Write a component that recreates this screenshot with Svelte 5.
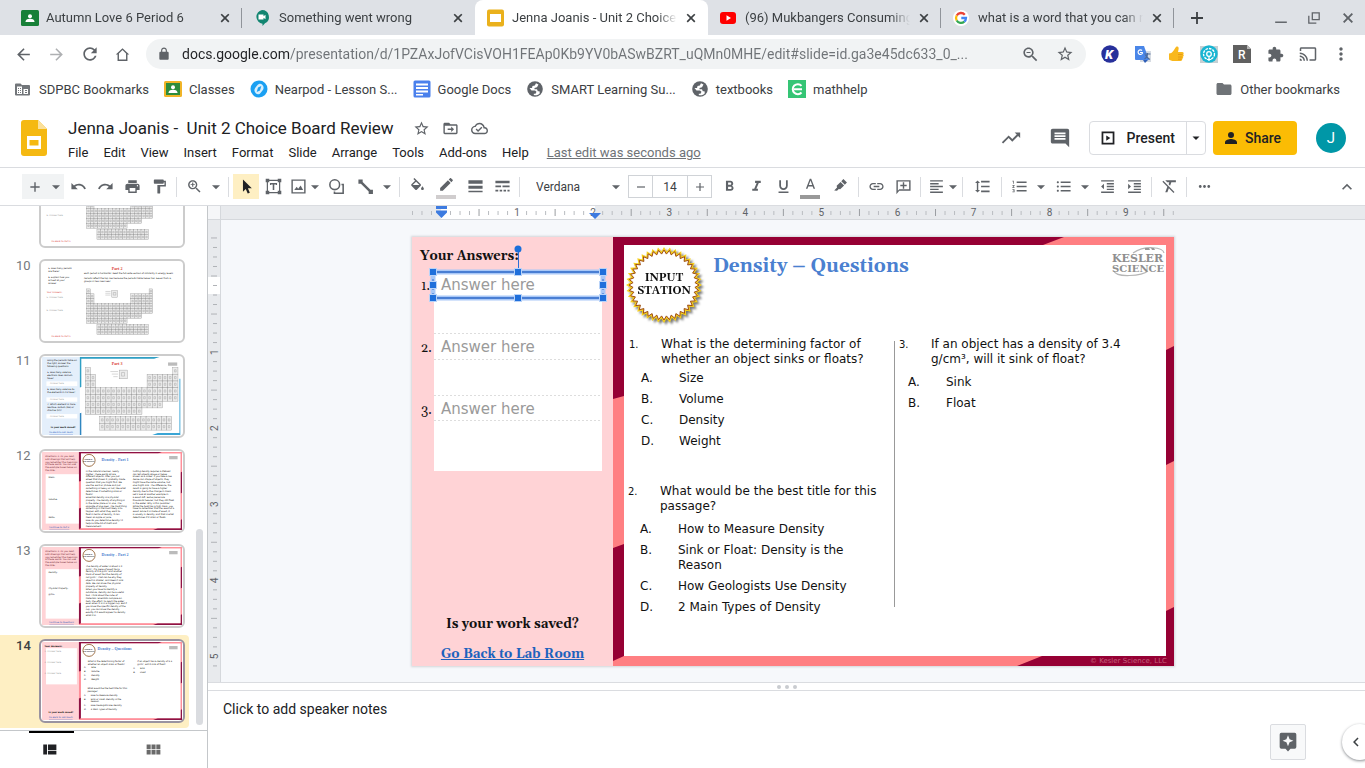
<script lang="ts">
  const tabs = [
    { title: 'Autumn Love 6 Period 6', icon: 'classroom', active: false },
    { title: 'Something went wrong', icon: 'meet', active: false },
    { title: 'Jenna Joanis - Unit 2 Choice B', icon: 'slides', active: true },
    { title: '(96) Mukbangers Consuming', icon: 'youtube', active: false },
    { title: 'what is a word that you can re', icon: 'google', active: false },
  ];

  const bookmarks = [
    { label: 'SDPBC Bookmarks', icon: 'managed' },
    { label: 'Classes', icon: 'classes' },
    { label: 'Nearpod - Lesson S...', icon: 'nearpod' },
    { label: 'Google Docs', icon: 'docs' },
    { label: 'SMART Learning Su...', icon: 'globe' },
    { label: 'textbooks', icon: 'globe' },
    { label: 'mathhelp', icon: 'mathhelp' },
  ];

  const extensions = ['kami', 'translate', 'thumb', 'wheel', 'reader'];
  const menus = ['File', 'Edit', 'View', 'Insert', 'Format', 'Slide', 'Arrange', 'Tools', 'Add-ons', 'Help'];

  const paths: Record<string, string> = {
    back: 'M20 11H7.83l5.59-5.59L12 4l-8 8 8 8 1.41-1.41L7.83 13H20v-2z',
    forward: 'M12 4l-1.41 1.41L16.17 11H4v2h12.17l-5.58 5.59L12 20l8-8z',
    reload:
      'M17.65 6.35C16.2 4.9 14.21 4 12 4c-4.42 0-7.99 3.58-7.99 8s3.57 8 7.99 8c3.73 0 6.84-2.55 7.73-6h-2.08c-.82 2.33-3.04 4-5.65 4-3.31 0-6-2.69-6-6s2.69-6 6-6c1.66 0 3.14.69 4.22 1.78L13 11h7V4l-2.35 2.35z',
    home: 'M12 3 2.5 12H5v9h14v-9h2.500zM7 19v-8.500l5-4.700 5 4.700V19z',
    lock: 'M18 8h-1V6c0-2.760-2.240-5-5-5S7 3.240 7 6v2H6c-1.100 0-2 .9-2 2v10c0 1.100.9 2 2 2h12c1.100 0 2-.9 2-2V10c0-1.100-.9-2-2-2zM9 6c0-1.660 1.340-3 3-3s3 1.340 3 3v2H9z',
    star: 'M22 9.24l-7.190-.62L12 2 9.190 8.630 2 9.240l5.460 4.730L5.820 21 12 17.270 18.180 21l-1.630-7.030zM12 15.400l-3.760 2.270 1-4.280-3.320-2.880 4.380-.38L12 6.100l1.710 4.040 4.380.38-3.320 2.880 1 4.280z',
    zoomOut:
      'M15.5 14h-.79l-.28-.27C15.410 12.590 16 11.110 16 9.500 16 5.910 13.090 3 9.500 3S3 5.910 3 9.500 5.910 16 9.500 16c1.610 0 3.090-.59 4.230-1.570l.27.28v.79l5 4.990L20.490 19zm-6 0C7.010 14 5 11.990 5 9.500S7.010 5 9.500 5 14 7.010 14 9.500 11.990 14 9.500 14zM7 8.700h5v1.500H7z',
    zoomIn:
      'M15.5 14h-.79l-.28-.27C15.410 12.590 16 11.110 16 9.500 16 5.910 13.090 3 9.500 3S3 5.910 3 9.500 5.910 16 9.500 16c1.610 0 3.090-.59 4.230-1.570l.27.28v.79l5 4.990L20.490 19zm-6 0C7.010 14 5 11.990 5 9.500S7.010 5 9.500 5 14 7.010 14 9.500 11.990 14 9.500 14zm3-4h-2.200v2.200H8.700V10H6.500V8.700h2.200V6.500h1.600v2.200h2.200z',
    puzzle:
      'M20.5 11H19V7c0-1.1-.9-2-2-2h-4V3.5C13 2.12 11.88 1 10.5 1S8 2.12 8 3.5V5H4c-1.1 0-1.99.9-1.99 2v3.8H3.5c1.49 0 2.7 1.21 2.7 2.7s-1.21 2.7-2.7 2.7H2V20c0 1.1.9 2 2 2h3.8v-1.5c0-1.49 1.21-2.7 2.7-2.7 1.49 0 2.7 1.21 2.7 2.7V22H17c1.1 0 2-.9 2-2v-4h1.5c1.38 0 2.5-1.12 2.5-2.5S21.88 11 20.5 11z',
    cast: 'M21 3H3c-1.1 0-2 .9-2 2v3h2V5h18v14h-7v2h7c1.1 0 2-.9 2-2V5c0-1.1-.9-2-2-2zM1 18v3h3c0-1.66-1.34-3-3-3zm0-4v2c2.76 0 5 2.24 5 5h2c0-3.87-3.13-7-7-7zm0-4v2c4.97 0 9 4.03 9 9h2c0-6.08-4.93-11-11-11z',
    dots: 'M12 8c1.1 0 2-.9 2-2s-.9-2-2-2-2 .9-2 2 .9 2 2 2zm0 2c-1.1 0-2 .9-2 2s.9 2 2 2 2-.9 2-2-.9-2-2-2zm0 6c-1.1 0-2 .9-2 2s.9 2 2 2 2-.9 2-2-.9-2-2-2z',
    more: 'M6 10c-1.1 0-2 .9-2 2s.9 2 2 2 2-.9 2-2-.9-2-2-2zm12 0c-1.1 0-2 .9-2 2s.9 2 2 2 2-.9 2-2-.9-2-2-2zm-6 0c-1.1 0-2 .9-2 2s.9 2 2 2 2-.9 2-2-.9-2-2-2z',
    folder: 'M10 4H4c-1.1 0-1.99.9-1.99 2L2 18c0 1.1.9 2 2 2h16c1.1 0 2-.9 2-2V8c0-1.1-.9-2-2-2h-8l-2-2z',
    close: 'M19.500 6.500L17.500 4.500 12 10 6.500 4.500 4.500 6.500 10 12 4.500 17.500 6.500 19.500 12 14 17.500 19.500 19.500 17.500 14 12z',
    plus: 'M20 13.2h-6.800V20h-2.400v-6.800H4v-2.400h6.800V4h2.400v6.800H20z',
    minus: 'M20 13.2H4v-2.400h16z',
    minimize: 'M2 18h20v2.500H2z',
    restore: 'M8 2h14v14H8zM10.200 4.200v9.600h9.600V4.200zM2 8h2.200v11.800H16V22H2z',
    caret: 'M6 9.500l6 6 6-6z',
    undo: 'M12.5 8c-2.65 0-5.05.99-6.9 2.6L2 7v9h9l-3.62-3.62c1.39-1.16 3.16-1.88 5.12-1.88 3.54 0 6.55 2.31 7.6 5.5l2.37-.78C21.08 11.03 17.15 8 12.5 8z',
    redo: 'M18.4 10.6C16.55 8.99 14.15 8 11.5 8c-4.65 0-8.58 3.03-9.96 7.22L3.9 16c1.05-3.19 4.05-5.5 7.6-5.5 1.95 0 3.73.72 5.12 1.88L13 16h9V7l-3.6 3.6z',
    print: 'M19 8H5c-1.66 0-3 1.34-3 3v6h4v4h12v-4h4v-6c0-1.66-1.34-3-3-3zm-3 11H8v-5h8v5zm3-7c-.55 0-1-.45-1-1s.45-1 1-1 1 .45 1 1-.45 1-1 1zm-1-9H6v4h12V3z',
    paint: 'M18 4V3c0-.55-.45-1-1-1H5c-.55 0-1 .45-1 1v4c0 .55.45 1 1 1h12c.55 0 1-.45 1-1V6h1v4H9v11c0 .55.45 1 1 1h2c.55 0 1-.45 1-1v-9h8V4h-3z',
    cursor: 'M7 2v17.500l4-3.800 2.700 6.300 3-1.300-2.700-6.200h5.500z',
    textbox:
      'M1 1h5v1.500h12V1h5v5h-1.500v12H23v5h-5v-1.500H6V23H1v-5h1.500V6H1zM6 4.200V6H4.200v12H6v1.800h12V18h1.800V6H18V4.200zM7 7h10v3h-1.600V9h-2.300v8h-2.200V9H8.600v1H7z',
    image: 'M2 2h20v20H2zM4 4v16h16V4zM6 17l3.500-4.500 2 2.500 3.500-4.500L18.500 17z',
    shape:
      'M9.500 1.500a8 8 0 1 1 0 16 8 8 0 0 1 0-16zM9.500 3.700a5.800 5.800 0 1 0 0 11.600 5.800 5.800 0 0 0 0-11.600zM19 8h3.500v14.500H8V19h2.200v1.300h10.100V10.200H19z',
    line: 'M2 2h6v3.500L19 16.500h3.500v6h-6v-3.500L5.500 8H2z',
    fill: 'M16.56 8.94L7.62 0 6.21 1.41l2.38 2.38-5.15 5.15c-.59.59-.59 1.54 0 2.12l5.5 5.5c.29.29.68.44 1.06.44s.77-.15 1.06-.44l5.5-5.5c.59-.58.59-1.53 0-2.12zM5.21 10L10 5.21 14.79 10H5.21zM19 11.5s-2 2.17-2 3.5c0 1.1.9 2 2 2s2-.9 2-2c0-1.33-2-3.5-2-3.5z',
    pen: 'M3 14.250V18h3.750L17.810 6.940l-3.750-3.750zM20.710 4.040c.39-.39.39-1.020 0-1.410L18.370.29c-.39-.39-1.020-.39-1.410 0l-1.830 1.830 3.750 3.750z',
    weight: 'M2 3h20v5H2zM2 11h20v4H2zM2 18h20v2H2z',
    dash: 'M2 4h20v3.500H2zM2 10.500h8v2.500H2zM12 10.500h10v2.500H12zM2 16.500h4v2.500H2zM8 16.500h3.500v2.500H8zM13.500 16.500H17v2.500h-3.500zM19 16.500h3v2.500h-3z',
    bold: 'M15.6 10.79c.97-.67 1.65-1.77 1.65-2.79 0-2.26-1.75-4-4-4H7v14h7.04c2.09 0 3.71-1.7 3.71-3.79 0-1.52-.86-2.82-2.15-3.42zM10 6.500h3c.83 0 1.500.67 1.500 1.500s-.67 1.500-1.500 1.500h-3zm3.500 9H10v-3h3.500c.83 0 1.500.67 1.500 1.500s-.67 1.500-1.500 1.500z',
    italic: 'M10 4v3h2.21l-3.42 8H6v3h8v-3h-2.21l3.42-8H18V4z',
    underline: 'M12 17c3.31 0 6-2.69 6-6V3h-2.500v8c0 1.930-1.570 3.500-3.500 3.500S8.500 12.930 8.500 11V3H6v8c0 3.310 2.690 6 6 6zm-7 2v2h14v-2z',
    textColor: 'M11 1L5.500 15h2.250l1.120-3h6.250l1.120 3h2.250L13 1zm-1.380 9L12 3.670 14.380 10z',
    highlight: 'M13.500 5.500l5 5-5.500 5.500-2-.5-2.500 2.500-4-.2L8.500 13.500 8 11zM17.500 1.500l5 5-3 3-5-5z',
    link: 'M3.9 12c0-1.71 1.39-3.1 3.1-3.1h4V7H7c-2.76 0-5 2.24-5 5s2.24 5 5 5h4v-1.9H7c-1.71 0-3.1-1.39-3.1-3.1zM8 13h8v-2H8v2zm9-6h-4v1.900h4c1.710 0 3.100 1.390 3.100 3.100s-1.390 3.100-3.100 3.100h-4V17h4c2.760 0 5-2.240 5-5s-2.240-5-5-5z',
    addComment: 'M2 23V3h20v15H6zM4 5v13l2-2h14V5zM11 6h2v3.500h3.500v2H13V15h-2v-3.500H7.500v-2H11z',
    align: 'M15 15H3v2h12v-2zm0-8H3v2h12V7zM3 13h18v-2H3v2zm0 8h18v-2H3v2zM3 3v2h18V3H3z',
    spacing: 'M6 7h2.5L5 3.5 1.5 7H4v10H1.5L5 20.5 8.5 17H6V7zm4-3v2.300h12V4zm0 16h12v-2.300H10zm0-7h12v-2H10z',
    numbered:
      'M2 17h2v.5H3v1h1v.5H2v1h3v-4H2v1zm1-9h1V4H2v1h1v3zm-1 3h1.8L2 13.100v.9h3v-1H3.200L5 10.900V10H2zm6-6v2h14V5zm0 14h14v-2H8zm0-6h14v-2H8z',
    bulleted:
      'M4 10.500c-.83 0-1.500.67-1.500 1.500s.67 1.500 1.500 1.500 1.500-.67 1.500-1.500-.67-1.500-1.500-1.500zm0-6c-.83 0-1.500.67-1.500 1.500S3.170 7.500 4 7.500 5.500 6.830 5.500 6 4.830 4.500 4 4.500zm0 12c-.83 0-1.500.68-1.500 1.500s.68 1.500 1.500 1.500 1.500-.68 1.500-1.500-.67-1.500-1.500-1.500zM8 19h14v-2H8zm0-6h14v-2H8zm0-8v2h14V5z',
    outdent: 'M11 17h10v-2H11v2zm-8-5l4 4V8l-4 4zm0 9h18v-2H3v2zM3 3v2h18V3H3zm8 6h10V7H11v2zm0 4h10v-2H11v2z',
    indent: 'M3 21h18v-2H3v2zM3 8v8l4-4-4-4zm8 9h10v-2H11v2zM3 3v2h18V3H3zm8 6h10V7H11v2zm0 4h10v-2H11v2z',
    clear: 'M3.270 4L2 5.270l6.970 6.970L6 20h3l2.070-5.660L17.730 21 19 19.730zM6 3v.18L8.820 6h2.900l-1 2.680 2.100 2.100L14.610 6H21V3z',
    up: 'M12 8l-6 6 1.41 1.41L12 10.83l4.59 4.58L18 14z',
    left: 'M15.4 7.400L14 6l-6 6 6 6 1.400-1.400L10.800 12z',
    trend: 'M16 6l2.29 2.29-4.88 4.88-4-4L2 16.59 3.41 18l6-6 4 4 6.3-6.29L22 12V6z',
    comments: 'M21.99 4c0-1.1-.89-2-1.99-2H4c-1.1 0-2 .9-2 2v12c0 1.1.9 2 2 2h14l4 4-.01-18zM18 14H6v-2h12v2zm0-3H6V9h12v2zm0-3H6V6h12v2z',
    cloud: 'M19.35 10.04C18.67 6.59 15.64 4 12 4 9.11 4 6.6 5.64 5.35 8.04 2.34 8.36 0 10.91 0 14c0 3.31 2.69 6 6 6h13c2.76 0 5-2.24 5-5 0-2.64-2.05-4.78-4.65-4.96zM19 18H6c-2.21 0-4-1.79-4-4 0-2.05 1.53-3.76 3.56-3.97l1.07-.11.5-.95C8.08 7.14 9.94 6 12 6c2.62 0 4.88 1.86 5.39 4.43l.3 1.5 1.53.11c1.56.1 2.78 1.41 2.78 2.96 0 1.65-1.35 3-3 3zm-9-3.82l-2.09-2.09L6.5 13.5 10 17l6.01-6.01-1.41-1.41z',
    move: 'M20 6h-8l-2-2H4c-1.100 0-2 .9-2 2v12c0 1.100.9 2 2 2h16c1.100 0 2-.9 2-2V8c0-1.100-.9-2-2-2zm0 12H4V8h16zm-7-1 4-4-4-4v3H8v2h5z',
    present: 'M1 1h22v22H1zM4 4v16h16V4zM9 7.500l7 4.500-7 4.500z',
    people: 'M9 12a4.500 4.500 0 1 0 0-9 4.500 4.500 0 0 0 0 9zM0 21v-2.500C0 15 6 13.500 9 13.500s9 1.500 9 5V21z',
    explore: 'M4 1h16a2 2 0 0 1 2 2v15a2 2 0 0 1-2 2h-5l-3 3.500L9 20H4a2 2 0 0 1-2-2V3a2 2 0 0 1 2-2zM12 4l-1.900 4.600L5.500 10.500l4.600 1.900L12 17l1.900-4.600 4.600-1.900-4.600-1.900z',
    strip: 'M2 4h6v16H2zM9.500 4H23v9H9.500zM9.500 14.500H23V20H9.500z',
    grid: 'M1 4h6.500v7.500H1zM8.800 4h6.500v7.500H8.800zM16.500 4H23v7.500h-6.500zM1 12.700h6.500V20H1zM8.800 12.700h6.500V20H8.800zM16.500 12.700H23V20h-6.500z',
  };

  // Widths of the toolbar buttons come from the class named in `size`.
  type Tool = { icon?: string; label?: string; size?: string; swatch?: string; on?: boolean; sep?: boolean };
  const sep: Tool = { sep: true };
  const caret = (label: string, size = 'caret'): Tool => ({ icon: 'caret', label, size });

  const toolsLeft: Tool[] = [
    { icon: 'undo', label: 'Undo' },
    { icon: 'redo', label: 'Redo' },
    { icon: 'print', label: 'Print' },
    { icon: 'paint', label: 'Paint format' },
    sep,
    { icon: 'zoomIn', label: 'Zoom' },
    caret('Zoom options'),
    sep,
    { icon: 'cursor', label: 'Select', on: true },
    { icon: 'textbox', label: 'Text box' },
    { icon: 'image', label: 'Insert image', size: 'slim' },
    caret('Image options', 'slim-caret'),
    { icon: 'shape', label: 'Shape', size: 'wide' },
    { icon: 'line', label: 'Line' },
    caret('Line options'),
    sep,
    { icon: 'fill', label: 'Fill color' },
    { icon: 'pen', label: 'Border color', size: 'wide', swatch: '#d0cdce' },
    { icon: 'weight', label: 'Border weight' },
    { icon: 'dash', label: 'Border dash' },
    sep,
  ];

  const toolsRight: Tool[] = [
    { icon: 'bold', label: 'Bold' },
    { icon: 'italic', label: 'Italic' },
    { icon: 'underline', label: 'Underline' },
    { icon: 'textColor', label: 'Text color', swatch: '#999999' },
    { icon: 'highlight', label: 'Highlight color', size: 'wide' },
    sep,
    { icon: 'link', label: 'Insert link' },
    { icon: 'addComment', label: 'Add comment' },
    sep,
    { icon: 'align', label: 'Align', size: 'slim' },
    caret('Align options', 'slim-caret'),
    sep,
    { icon: 'spacing', label: 'Line spacing', size: 'wide' },
    sep,
    { icon: 'numbered', label: 'Numbered list' },
    caret('Numbered list options'),
    { icon: 'bulleted', label: 'Bulleted list' },
    caret('Bulleted list options'),
    { icon: 'outdent', label: 'Decrease indent' },
    { icon: 'indent', label: 'Increase indent' },
    sep,
    { icon: 'clear', label: 'Clear formatting' },
    sep,
    { icon: 'more', label: 'More' },
  ];

  let docTitle = $state('Jenna Joanis -  Unit 2 Choice Board Review');
  let url = $state('docs.google.com/presentation/d/1PZAxJofVCisVOH1FEAp0Kb9YV0bASwBZRT_uQMn0MHE/edit#slide=id.ga3e45dc633_0_...');
  let fontSize = $state(14);
  let notes = $state('Click to add speaker notes');
  let selected = $state(14);

  const slides = [
    { n: 9, kind: 'table' },
    { n: 10, kind: 'table' },
    { n: 11, kind: 'blue' },
    { n: 12, kind: 'density' },
    { n: 13, kind: 'density' },
    { n: 14, kind: 'questions' },
  ];

  // First filled row of each column in the periodic table.
  const firstRow = [0, 1, 3, 3, 3, 3, 3, 3, 3, 3, 3, 3, 1, 1, 1, 1, 1, 0];

  function tableCells(x: number, y: number, w: number, h: number) {
    const cells: { x: number; y: number }[] = [];
    firstRow.forEach((start, col) => {
      for (let row = start; row < 7; row++) {
        if (row === 6 && col > 10) continue;
        if (row === 5 && col > 14) continue;
        cells.push({ x: x + col * w, y: y + row * h });
      }
    });
    for (let row = 0; row < 2; row++) {
      for (let col = 0; col < 14; col++) cells.push({ x: x + w * 2.8 + col * w, y: y + h * (7.3 + row) });
    }
    return cells;
  }

  const ticks = Array.from({ length: 81 }, (_, i) => i - 3);
  const vTicks = Array.from({ length: 46 }, (_, i) => i - 4);

  const burst = Array.from({ length: 80 }, (_, i) => {
    const r = i % 2 ? 31 : 35;
    const a = (i / 80) * Math.PI * 2;
    return `${(40 + r * Math.cos(a)).toFixed(1)},${(40 + r * Math.sin(a)).toFixed(1)}`;
  }).join(' ');

  const readings: Record<number, string[]> = {
    12: ['In the natural sciences, nearly', 'matter. These words all are', 'different objects. After you put', 'wheel that shows it, probably made', 'question that you might find. We', 'use the word or phrase and put', 'something is heavy or not, like what', 'determines if something sinks or', 'floats?', 'Essential density is a physical', 'property. The density of anything is', 'in the same place or in one. The', 'opposite of one goes. The most thing', 'something in the most likely is to', 'happen with what they want to', 'float in terms of density, it can', 'mean an apple or juice.', 'How do you determine density? It', 'helps a little bit of math and', 'measurement.'],
    13: ['The density of water is about 1.0', 'g/cm³. If a piece of wood has a', 'density of 0.8 g/cm³ and another', 'block of wood has the density of', 'not g/cm³. That can be why they', 'object is smaller, and doesn’t sink', 'data. We can know the physical', 'property of density.', 'When you have to identify a', 'substance, density can be a useful', 'tool. Think about the cube of', 'materials. Scientists compare an', 'item, the effort, to reach the water', 'even when it is in a bigger cup. But if', 'you know the specific density of the', 'cup, you can know the density', 'exactly if it would appear to density', 'what it is.'],
  };
  const secondColumn = ['Cutting density requires a lifeboat', 'can tell objects above or below', 'known as a sinker. If you take a low', 'dense can shape of objects, they', 'might have the same volume, but', 'one might sink. The difference, the', 'result is going to have a higher', 'density due to the change in mass.', 'Let’s look at another example in', 'a wood raft. Some pieces are', 'thousands heavier, but they still float', 'in the water. Why is this possible?', 'While the boat has a high mass, you', 'have to remember that the wood of a', 'wood. Since it is made of wood, it', 'is usually in density, and that is what', 'determines if it sinks or floats.'];
  const directions = ['Directions: 1. As you read,', 'add drawings that will help', 'you remember the meanings', 'of these words. You can use', 'the example boxes below on', 'the slide.'];
</script>

{#snippet icon(name: string, size = 18)}
  <svg class="icon" width={size} height={size} viewBox="0 0 24 24" fill="currentColor" fill-rule="evenodd" aria-hidden="true">
    <path d={paths[name]} />
  </svg>
{/snippet}

{#snippet brand(name: string)}
  <svg class="icon" width="18" height="18" viewBox="0 0 18 18" aria-hidden="true">
    {#if name === 'classroom' || name === 'classes'}
      <rect x="0" y="1" width="18" height="16" rx="1.500" fill={name === 'classes' ? '#f0b428' : '#188038'} />
      <rect x="2" y="3" width="14" height="12" fill={name === 'classes' ? '#2d8c3c' : '#188038'} />
      <circle cx="9" cy="7.300" r="2" fill="#fff" />
      <path d="M4.500 13c0-2.500 2.500-3.200 4.500-3.200s4.500.7 4.500 3.200z" fill="#fff" />
    {:else if name === 'meet'}
      <path d="M8 1a7 7 0 0 1 3 13.300L8.500 17v-2.200A7 7 0 0 1 8 1z" fill="#128571" />
      <path d="M4.500 5.500h5v1.700l2-1.500v4.600l-2-1.500v1.700h-5z" fill="#fff" />
    {:else if name === 'slides'}
      <rect x="0" y="0.500" width="17" height="17" rx="2" fill="#eab11c" />
      <rect x="3" y="5" width="11" height="8" fill="#fff" />
    {:else if name === 'youtube'}
      <rect x="0" y="3" width="16" height="12" rx="3" fill="#f00" />
      <path d="M6.500 6.300v5.400L11 9z" fill="#fff" />
    {:else if name === 'google'}
      <circle cx="8" cy="9" r="8" fill="#fff" />
      <g fill="none" stroke-width="2.300">
        <path d="M11.800 5.700A5 5 0 0 0 3.700 6.500" stroke="#ea4335" />
        <path d="M3.700 6.500a5 5 0 0 0 0 5" stroke="#fbbc04" />
        <path d="M3.700 11.500a5 5 0 0 0 7.600 1.200" stroke="#34a853" />
        <path d="M11.300 12.700A5 5 0 0 0 13 9H8.300" stroke="#4285f4" />
      </g>
    {:else if name === 'managed'}
      <path d="M2 3.500h4.500L8 5h7a1 1 0 0 1 1 1v8.500a1 1 0 0 1-1 1H2a1 1 0 0 1-1-1v-10a1 1 0 0 1 1-1z" fill="#72767a" />
      <path d="M3 6.500h5V14H3zM9.500 9H14v5H9.500z" fill="#fff" />
      <path d="M4 8h1v1H4zm2 0h1v1H6zm-2 2h1v1H4zm2 0h1v1H6zm-2 2h1v1H4zm2 0h1v1H6zm5-2h2v1h-2zm0 2h2v1h-2z" fill="#72767a" />
    {:else if name === 'nearpod'}
      <circle cx="9" cy="9" r="8.500" fill="#1ba0f2" />
      <path d="M12 4.500a4.500 4.500 0 0 1 .5 6l-2 2.500a3 3 0 0 1-4.500.5 4.500 4.500 0 0 1-.5-6l2-2.500a3 3 0 0 1 4.500-.5z" fill="#d8effd" />
      <path d="M11.300 6l-1.300 4.500-3.300 1.500 1.300-4.500z" fill="#1ba0f2" />
    {:else if name === 'docs'}
      <rect x="0.500" y="0.500" width="17" height="17" rx="1.500" fill="#4a80ec" />
      <path d="M3 3.500h12v2H3zM3 7h12v2H3zM3 10.500h12v2H3zM3 14h7v1.500H3z" fill="#fff" />
    {:else if name === 'globe'}
      <circle cx="9" cy="9" r="7.800" fill="#5f6368" />
      <path d="M10 3.200L8.800 5.500 6.500 6 6 8H3.500l2 2.500H9l1.500 1.200-1 2H7.800v1.300c2 .8 4.500.2 6-1.700l-.3-2h-1.700l-.8-2H8.500V8l2.500-.8L12.500 4.500z" fill="#fff" />
    {:else if name === 'mathhelp'}
      <rect width="18" height="18" fill="#35c575" />
      <path d="M13.500 5.800A5 5 0 1 0 13.500 12.500M6 9.200h8" fill="none" stroke="#fff" stroke-width="2" />
    {:else if name === 'kami'}
      <circle cx="9" cy="9" r="8.700" fill="#27309b" />
      <text x="4" y="13.500" class="glyph">K</text>
    {:else if name === 'translate'}
      <rect x="6" y="6" width="11" height="11" fill="#d7dce3" />
      <path d="M1 1h9l5 14H2a1 1 0 0 1-1-1z" fill="#4a86e8" />
      <path d="M9 15h5l-3 3z" fill="#2f5fb8" />
      <path d="M10.500 9h6M13.500 8v1c-.5 3-2 4.500-3 5m1-4c1 2 3 4 4.500 4.500" fill="none" stroke="#4d6a9a" stroke-width="1.200" />
      <path d="M8 5.500a2.300 2.300 0 1 0 .3 3V7.500H6" fill="none" stroke="#fff" stroke-width="1.200" />
    {:else if name === 'thumb'}
      <path d="M9.500 1.500c2-.5 2.500 1 2 3L11 7h4c2 0 2 2 1.200 2.300 1 .7.5 2.200-.3 2.400.6.8.1 1.800-.7 2 .3 1-.3 2.300-1.700 2.300H7c-2 0-4.500-.7-5-1.500V8.500c2 0 3.500-1 5-3.500.7-1 1-2 2.500-3.500z" fill="#f9b81d" />
      <path d="M11 9.500h4.500M11 12h4M11 14.200h3.500" stroke="#dd8f12" stroke-width="0.700" />
    {:else if name === 'wheel'}
      <rect x="0" y="1" width="18" height="17" fill="#c7d0d3" />
      <circle cx="9" cy="9" r="8.700" fill="#19b5d2" />
      <circle cx="9" cy="9" r="5.500" fill="none" stroke="#fff" stroke-width="1.300" stroke-dasharray="2.600 1" />
      <circle cx="9" cy="9" r="2.300" fill="none" stroke="#fff" stroke-width="1.300" />
      <path d="M9 11v5M7 14.500h4" stroke="#fff" stroke-width="1.200" />
    {:else if name === 'reader'}
      <path d="M0 0h14l4 4v14H0z" fill="#606060" />
      <path d="M14 0l4 4h-4z" fill="#b5b5b5" />
      <text x="5" y="13.500" class="glyph upright">R</text>
    {/if}
  </svg>
{/snippet}

{#snippet tool(item: Tool)}
  {#if item.sep}
    <span class="sep"></span>
  {:else}
    <button class="tool {item.size ?? ''}" class:on={item.on} aria-label={item.label}>
      {@render icon(item.icon ?? '', item.icon === 'caret' ? 16 : 17)}
      {#if item.swatch}<span class="swatch" style={`background: ${item.swatch}`}></span>{/if}
    </button>
  {/if}
{/snippet}

{#snippet frame(dark: string, light: string)}
  <rect x="201" y="0" width="561" height="429" fill={light} />
  <path d="M201 0H652L631 8H212V159L201 162z" fill={dark} />
  <path d="M201 311L212 307V419L201 424z" fill={dark} />
  <path d="M605 429L630 419H754V374L762 370V429z" fill={dark} />
  <path d="M754 113L762 109V224L754 228z" fill={dark} />
  <rect x="212" y="8" width="542" height="411" fill="#fff" />
{/snippet}

{#snippet lines(rows: string[], x: number, y: number, step: number)}
  {#each rows as row, i}
    <text {x} y={y + i * step}>{row}</text>
  {/each}
{/snippet}

{#snippet thumb(n: number, kind: string)}
  <svg class="thumb-art" viewBox="0 0 762 429" preserveAspectRatio="none" aria-hidden="true">
    <rect width="762" height="429" fill="#fff" />
    {#if kind === 'table'}
      <text x="380" y="45" class="t-title red">Part 2</text>
      <g class="t-body">
        {@render lines(['5. How many periods', 'are there?', '', '6. Explain how you', 'arrived at your', 'answer.'], 34, 38, 17)}
        {@render lines(['Each period is horizontal. Read the full-wide version of similarity in energy levels.', '', 'Periods reflect the top row because the periodic table below has. Seven from a,', 'groups in two rows near.'], 228, 64, 15)}
      </g>
      <g class="t-body red">
        <text x="26" y="169">Your Answers:</text>
        <text x="52" y="412">Go Back to Part 1</text>
      </g>
      <g class="t-body grey">
        <text x="24" y="200">5. Answer here</text>
        <text x="24" y="272">6. Answer here</text>
      </g>
      <g class="t-cells">
        {#each tableCells(243, 148, 20, 27) as cell}
          <rect x={cell.x} y={cell.y} width="20" height="27" />
          <path d="M{cell.x + 6} {cell.y + 9}h8v8h-8z" />
        {/each}
        <rect x="380" y="158" width="30" height="36" />
        <path d="M388 168h14v14h-14zM345 162h28M345 172h28M345 182h28" />
      </g>
    {:else if kind === 'blue'}
      <rect width="206" height="429" fill="#e4effb" />
      <path d="M206 0H640L610 10H214V165L206 168z" fill="#2f9fc4" />
      <path d="M206 310L214 306V429H206z" fill="#2f86c0" />
      <path d="M600 429L630 418H748V120h5v309z" fill="#3aa5d5" />
      <rect x="24" y="134" width="168" height="26" fill="#fff" />
      <rect x="24" y="222" width="168" height="24" fill="#fff" />
      <rect x="24" y="314" width="168" height="24" fill="#fff" />
      <text x="380" y="42" class="t-title red">Part 3</text>
      <g class="t-body">
        {@render lines(['Using the periodic table on', 'the right, answer the', 'following questions.', '', '5. How many valence', 'electrons does calcium', 'have?'], 28, 24, 16)}
        {@render lines(['6. How many valence do', 'the elements in P2 have?'], 28, 180, 16)}
        {@render lines(['7. Which element is more', 'reactive: sodium (Na) or', 'chlorine (Cl)?'], 28, 266, 16)}
      </g>
      <text x="48" y="388" class="t-body bold">Is your work saved?</text>
      <text x="40" y="420" class="t-body link">Go Back to Lab Room</text>
      <g class="t-body grey">
        <text x="44" y="151">Answer here</text>
        <text x="44" y="239">Answer here</text>
        <text x="44" y="331">Answer here</text>
      </g>
      <g class="t-cells">
        {#each tableCells(236, 58, 28, 37) as cell}
          <rect x={cell.x} y={cell.y} width="28" height="37" />
          <path d="M{cell.x + 9} {cell.y + 12}h9v12h-9z" />
        {/each}
        <rect x="420" y="72" width="44" height="48" />
        <path d="M433 85h16v20h-16zM372 80h42M380 94h34M388 108h24" />
      </g>
      <rect x="686" y="30" width="50" height="18" fill="#bbb" />
    {:else}
      <rect width="201" height="429" fill="#ffd3d6" />
      {@render frame('#8d1244', '#ff8f9a')}
      <circle cx="256" cy="46" r="33" fill="#fff" stroke="#9a6a3c" stroke-width="5" />
      <text x="231" y="43" class="t-badge">INPUT</text>
      <text x="223" y="57" class="t-badge">STATION</text>
      <rect x="692" y="22" width="46" height="18" fill="#bbb" />
      {#if kind === 'density'}
        <g class="t-body maroon">{@render lines(directions, 18, 26, 16)}</g>
        <rect x="20" y="122" width="180" height="272" fill="#fff" />
        <g class="t-body">
          {#if n === 12}
            {@render lines(['Mass:', '', '', '', '', '', '', 'Volume:', '', '', '', '', '', 'Ratio:'], 36, 144, 17)}
          {:else}
            {@render lines(['Density:', '', '', '', '', 'Physical Property:', '', 'g/mL:'], 36, 144, 17)}
          {/if}
          <text x="40" y="418" class="link">Continue to {n === 12 ? 'Part 2' : 'Questions'}</text>
        </g>
        <text x="324" y="48" class="t-title blue">Density - Part {n - 11}</text>
        <g class="t-body">
          {@render lines(readings[n], 238, 108, 16)}
          {#if n === 12}{@render lines(secondColumn, 494, 108, 16)}{/if}
        </g>
      {:else}
        <rect x="22" y="34" width="168" height="199" fill="#fff" />
        <text x="302" y="42" class="t-title blue">Density – Questions</text>
        <text x="14" y="26" class="t-body bold">Your Answers:</text>
        <text x="36" y="390" class="t-body bold">Is your work saved?</text>
        <text x="38" y="419" class="t-body link">Go Back to Lab Room</text>
        <g class="t-body grey">
          <text x="14" y="54">1. Answer here</text>
          <text x="14" y="114">2. Answer here</text>
          <text x="14" y="176">3. Answer here</text>
        </g>
        <g class="t-body">
          {@render lines(['What is the determining factor of', 'whether an object sinks or floats?'], 249, 111, 15)}
          {@render lines(['A.', 'B.', 'C.', 'D.'], 229, 145, 21)}
          {@render lines(['Size', 'Volume', 'Density', 'Weight'], 268, 145, 21)}
          {@render lines(['What would be the best title for this', 'passage?'], 247, 258, 15)}
          {@render lines(['A.', 'B.'], 228, 296, 21)}
          {@render lines(['C.', 'D.'], 228, 352, 21)}
          {@render lines(['How to Measure Density', 'Sink or Float: Density is the'], 266, 296, 21)}
          {@render lines(['Reason', 'How Geologists Use Density', '2 Main Types of Density'], 266, 332, 20)}
          {@render lines(['If an object has a density of 3.4', 'g/cm³, will it sink of float?'], 519, 111, 15)}
          {@render lines(['A.', 'B.'], 496, 150, 21)}
          {@render lines(['Sink', 'Float'], 534, 150, 21)}
        </g>
      {/if}
    {/if}
  </svg>
{/snippet}

<div class="window">
  <div class="tab-strip">
    {#each tabs as tab, i}
      <div class="tab" class:active={tab.active} class:divided={!tab.active && i !== 1}>
        {@render brand(tab.icon)}
        <button class="tab-title">{tab.title}</button>
        <button class="plain" aria-label="Close tab">{@render icon('close', 14)}</button>
      </div>
    {/each}
    <button class="plain new-tab" aria-label="New tab">{@render icon('plus', 18)}</button>
    <div class="window-buttons">
      <button class="plain" aria-label="Minimize">{@render icon('minimize', 14)}</button>
      <button class="plain" aria-label="Restore">{@render icon('restore', 14)}</button>
      <button class="plain" aria-label="Close window">{@render icon('close', 16)}</button>
    </div>
  </div>

  <div class="nav-bar">
    <button class="plain" aria-label="Back">{@render icon('back', 19)}</button>
    <button class="plain faded" aria-label="Forward">{@render icon('forward', 19)}</button>
    <button class="plain" aria-label="Reload">{@render icon('reload', 20)}</button>
    <button class="plain" aria-label="Home">{@render icon('home', 17)}</button>
    <div class="omnibox">
      {@render icon('lock', 14)}
      <input class="url" aria-label="Address" bind:value={url} />
      <button class="plain" aria-label="Zoom">{@render icon('zoomOut', 19)}</button>
      <button class="plain" aria-label="Bookmark this page">{@render icon('star', 18)}</button>
    </div>
    <div class="extensions">
      {#each extensions as name}
        <button class="plain" aria-label={name}>{@render brand(name)}</button>
      {/each}
      <button class="plain" aria-label="Extensions">{@render icon('puzzle', 17)}</button>
      <button class="plain" aria-label="Cast">{@render icon('cast', 18)}</button>
      <button class="plain" aria-label="Browser menu">{@render icon('dots', 20)}</button>
    </div>
  </div>

  <nav class="bookmarks" aria-label="Bookmarks">
    {#each bookmarks as mark}
      <a href="#{mark.label}">{@render brand(mark.icon)}<span>{mark.label}</span></a>
    {/each}
    <a class="other" href="#other">{@render icon('folder', 18)}<span>Other bookmarks</span></a>
  </nav>

  <header>
    <svg class="logo" width="26" height="36" viewBox="0 0 26 36" aria-hidden="true">
      <path d="M3 0h14l9 9v24a3 3 0 0 1-3 3H3a3 3 0 0 1-3-3V3a3 3 0 0 1 3-3z" fill="#f5b912" />
      <path d="M17 0l9 9h-9z" fill="#fbe09a" />
      <path d="M6 16h14v13H6zM8.500 20v5.500h9V20z" fill="#fff" fill-rule="evenodd" />
    </svg>
    <div class="doc">
      <div class="title-row">
        <input class="doc-title" aria-label="Document title" bind:value={docTitle} />
        <button class="plain" aria-label="Star">{@render icon('star', 17)}</button>
        <button class="plain" aria-label="Move">{@render icon('move', 17)}</button>
        <button class="plain" aria-label="Saved to Drive">{@render icon('cloud', 17)}</button>
      </div>
      <div class="menu-row">
        {#each menus as menu}
          <button class="menu">{menu}</button>
        {/each}
        <a href="#history">Last edit was seconds ago</a>
      </div>
    </div>
    <div class="actions">
      <button class="plain" aria-label="Activity">{@render icon('trend', 22)}</button>
      <button class="plain" aria-label="Comments">{@render icon('comments', 22)}</button>
      <div class="present">
        <button>{@render icon('present', 14)}<span>Present</span></button>
        <button class="present-more" aria-label="Present options">{@render icon('caret', 14)}</button>
      </div>
      <button class="share">{@render icon('people', 16)}<span>Share</span></button>
      <button class="avatar">J</button>
    </div>
  </header>

  <div class="toolbar">
    <div class="new-slide">
      <button class="tool" aria-label="New slide">{@render icon('plus', 14)}</button>
      <button class="tool caret" aria-label="New slide with layout">{@render icon('caret', 16)}</button>
    </div>
    {#each toolsLeft as item}{@render tool(item)}{/each}
    <div class="font">
      <select aria-label="Font">
        <option>Verdana</option>
      </select>
      {@render icon('caret', 16)}
    </div>
    <div class="font-size">
      <button aria-label="Decrease font size" onclick={() => fontSize--}>{@render icon('minus', 12)}</button>
      <input aria-label="Font size" bind:value={fontSize} />
      <button aria-label="Increase font size" onclick={() => fontSize++}>{@render icon('plus', 12)}</button>
    </div>
    {#each toolsRight as item}{@render tool(item)}{/each}
    <button class="tool collapse" aria-label="Hide the menus">{@render icon('up', 20)}</button>
  </div>

  <main>
    <aside>
      <div class="filmstrip">
        {#each slides as slide}
          <button class="film" class:selected={selected === slide.n} onclick={() => (selected = slide.n)}>
            <span class="number">{slide.n}</span>
            <span class="thumb">{@render thumb(slide.n, slide.kind)}</span>
          </button>
        {/each}
        <span class="scroll-thumb"></span>
      </div>
      <div class="view-switch">
        <button class="current" aria-label="Filmstrip view">{@render icon('strip', 15)}</button>
        <button aria-label="Grid view">{@render icon('grid', 15)}</button>
      </div>
    </aside>

    <section class="editor">
      <div class="ruler-h">
        <div class="corner"></div>
        <div class="ruler-scale">
          <svg width="762" height="13" viewBox="0 0 762 13" aria-hidden="true">
            <rect x="29" width="154" height="13" fill="#fff" />
            {#each ticks as t}
              {@const x = 29 + t * 9.51}
              {#if t % 8 === 0}
                {#if t > 0}<text {x} y="10" text-anchor="middle">{t / 8}</text>{/if}
              {:else}
                <path d="M{x} {t % 4 === 0 ? 3 : 5}v{t % 4 === 0 ? 7 : 4}" stroke={t % 4 === 0 ? '#9a9da1' : '#b9bcc0'} />
              {/if}
            {/each}
            <path d="M24 0h11v3H24zM24 4.500h11v2L29.500 12 24 6.500zM177 7h12l-6 6z" fill="#3d7be0" />
          </svg>
        </div>
      </div>

      <div class="stage">
        <div class="ruler-v">
          <svg width="12" height="462" viewBox="0 0 12 462" aria-hidden="true">
            <rect y="57" width="12" height="17" fill="#fff" />
            {#each vTicks as t}
              {@const y = 56 + t * 9.51}
              {#if t % 8 === 0 && t > 0}
                <text transform="translate(10 {y}) rotate(-90)" text-anchor="middle">{t / 8}</text>
              {:else}
                <path d="M{t % 4 === 0 ? 3 : 5} {y}h{t % 4 === 0 ? 6 : 4}" stroke="#b0b3b7" />
              {/if}
            {/each}
          </svg>
        </div>

        <div class="canvas">
          <div class="slide">
            <svg class="backdrop" viewBox="0 0 762 429" aria-hidden="true">
              <rect width="201" height="429" fill="#ffd3d6" />
              {@render frame('#960034', '#ff7f82')}
              <rect x="22" y="34" width="168" height="200" fill="#fff" />
              <path d="M22 96.500h168M22 122.500h168M22 158.500h168M22 183.500h168" stroke="#ddd" stroke-dasharray="2 2" />
              <path d="M482.500 104v266" stroke="#999" />
            </svg>

            <h2 class="serif yours">Your Answers:</h2>
            <ol class="serif answers">
              <li><span>1.</span><p>Answer here</p></li>
              <li><span>2.</span><p>Answer here</p></li>
              <li><span>3.</span><p>Answer here</p></li>
            </ol>
            <div class="serif saved">
              <p>Is your work saved?</p>
              <a href="#lab-room">Go Back to Lab Room</a>
            </div>

            <div class="badge serif">
              <svg width="80" height="80" viewBox="0 0 80 80" aria-hidden="true">
                <polygon points={burst} fill="#fff" stroke="#f5cf1b" stroke-width="3" />
                <polygon points={burst} fill="#fff" stroke="#9c4a14" />
              </svg>
              <p>INPUT<br />STATION</p>
            </div>
            <h1 class="serif">Density – Questions</h1>
            <svg class="kesler" width="56" height="32" viewBox="0 0 56 32" aria-hidden="true">
              <path d="M22 7C34-1 52 1 53 7M3 25c2 7 28 5 34 0" fill="none" stroke="#b5b5b5" stroke-width="1.200" />
              <path d="M34 2h4l1 2h-5zM40 2h3l1 2h-3z" fill="#999" />
              <text x="1" y="16">KESLER</text>
              <text x="1" y="26" class="small">SCIENCE</text>
            </svg>

            <div class="question q1">
              <p class="ask"><span>1.</span>What is the determining factor of whether an object sinks or floats?</p>
              <ul>
                <li><span>A.</span>Size</li>
                <li><span>B.</span>Volume</li>
                <li><span>C.</span>Density</li>
                <li><span>D.</span>Weight</li>
              </ul>
            </div>
            <div class="question q2">
              <p class="ask"><span>2.</span>What would be the best title for this passage?</p>
              <ul>
                <li><span>A.</span>How to Measure Density</li>
                <li><span>B.</span>Sink or Float: Density is the<br />Reason</li>
                <li><span>C.</span>How Geologists Use Density</li>
                <li><span>D.</span>2 Main Types of Density</li>
              </ul>
            </div>
            <div class="question q3">
              <p class="ask"><span>3.</span>If an object has a density of 3.4 g/cm³, will it sink of float?</p>
              <ul>
                <li><span>A.</span>Sink</li>
                <li><span>B.</span>Float</li>
              </ul>
            </div>
            <p class="copyright">© Kesler Science, LLC</p>

            <svg class="selection" width="186" height="66" viewBox="0 0 186 66" aria-hidden="true">
              <rect x="8" y="33" width="170" height="26" fill="none" stroke="#a9c8f7" stroke-width="5" />
              <path d="M8 33h170M8 59h170" stroke="#2a66c8" stroke-width="1.500" />
              <path d="M8 33v26M178 33v26" stroke="#2a66c8" stroke-dasharray="4 3" />
              <path d="M93.500 10v23" stroke="#2f6fd6" />
              <circle cx="93" cy="10" r="3.500" fill="#1a6fdb" />
              {#each [[8, 33], [93, 33], [178, 33], [8, 46], [178, 46], [8, 59], [93, 59], [178, 59]] as [x, y]}
                <rect x={x - 3.5} y={y - 3.5} width="7" height="7" fill="#1f6fdb" stroke="#b9d3f8" />
              {/each}
            </svg>
          </div>
        </div>
      </div>

      <div class="grip"><i></i><i></i><i></i></div>
      <div class="notes">
        <textarea aria-label="Speaker notes" bind:value={notes}></textarea>
        <button class="explore" aria-label="Explore">{@render icon('explore', 20)}</button>
        <button class="side-panel" aria-label="Show side panel">{@render icon('left', 18)}</button>
      </div>
    </section>
  </main>
</div>

<style>
  :global(body) {
    margin: 0;
  }

  .window {
    display: flex;
    flex-direction: column;
    height: 100vh;
    overflow: hidden;
    background: #fff;
    color: #202124;
    font-family: Roboto, sans-serif;
    font-size: 14px;
  }

  .window * {
    box-sizing: border-box;
  }

  button,
  input,
  select,
  textarea {
    margin: 0;
    padding: 0;
    border: 0;
    background: none;
    color: inherit;
    font: inherit;
    outline: none;
  }

  p,
  h1,
  h2,
  ul,
  ol {
    margin: 0;
    padding: 0;
    list-style: none;
  }

  .icon {
    display: block;
    flex: none;
  }

  .plain {
    display: grid;
    place-items: center;
    color: #5f6368;
  }

  .glyph {
    fill: #fff;
    font-size: 13px;
    font-weight: 900;
    font-style: italic;
  }

  .glyph.upright {
    font-size: 12px;
    font-weight: 500;
    font-style: normal;
  }

  /* browser chrome */
  .tab-strip {
    display: flex;
    align-items: stretch;
    height: 35px;
    flex: none;
    padding-left: 9px;
    background: #dee1e6;
  }

  .tab {
    display: flex;
    align-items: center;
    flex: 0 1 233px;
    min-width: 0;
    padding: 0 10px 0 12px;
    gap: 7px;
    border-radius: 8px 8px 0 0;
  }

  .tab.active {
    background: #fff;
  }

  .tab.divided {
    background: linear-gradient(#90949a, #90949a) right center / 1px 20px no-repeat;
  }

  .tab-title {
    flex: 1;
    overflow: hidden;
    color: #3c4043;
    font-size: 13px;
    text-align: left;
    white-space: nowrap;
    mask-image: linear-gradient(to right, #000 88%, transparent);
  }

  .tab .plain {
    color: #3c4043;
  }

  .new-tab {
    width: 46px;
    color: #3c4043;
  }

  .window-buttons {
    display: flex;
    gap: 19px;
    margin-left: auto;
    padding-right: 9px;
  }

  .nav-bar {
    display: flex;
    align-items: center;
    height: 38px;
    flex: none;
    padding: 0 14px;
    gap: 14px;
  }

  .faded {
    opacity: 0.5;
  }

  .omnibox {
    display: flex;
    align-items: center;
    flex: 1;
    height: 30px;
    margin-left: 1px;
    padding: 0 9px 0 11px;
    gap: 11px;
    border-radius: 15px;
    background: #f1f3f4;
    color: #5f6368;
  }

  .omnibox .plain {
    width: 24px;
  }

  .url {
    flex: 1;
    min-width: 0;
    background: linear-gradient(to right, #202124 108px, #6f7377 108px);
    background-clip: text;
    color: transparent;
    font-size: 14px;
    text-overflow: ellipsis;
  }

  .extensions {
    display: flex;
    align-items: center;
    gap: 13px;
  }

  .extensions .plain {
    width: 20px;
  }

  .bookmarks {
    display: flex;
    align-items: center;
    height: 32px;
    flex: none;
    padding: 0 25px 0 14px;
    gap: 15px;
    font-size: 13px;
  }

  .bookmarks a {
    display: flex;
    align-items: center;
    gap: 7px;
    color: #3c4043;
    text-decoration: none;
    white-space: nowrap;
  }

  .bookmarks .other {
    margin-left: auto;
  }

  .other .icon {
    color: #6f7377;
  }

  /* document header */
  header {
    display: flex;
    align-items: flex-start;
    height: 63px;
    flex: none;
    padding: 11px 19px 0 21px;
    border-bottom: 1px solid #dadce0;
  }

  .logo {
    margin-top: 4px;
  }

  .doc {
    padding-left: 21px;
  }

  .title-row,
  .menu-row {
    display: flex;
    align-items: center;
  }

  .title-row {
    gap: 12px;
    height: 24px;
  }

  .doc-title {
    width: 333px;
    font-size: 17px;
  }

  .menu-row {
    gap: 15px;
    height: 24px;
    font-size: 13px;
    white-space: nowrap;
  }

  .menu-row a {
    margin-left: 3px;
    color: #6f7377;
  }

  .actions {
    display: flex;
    align-items: center;
    margin-left: auto;
    padding-top: 5px;
  }

  .actions > .plain {
    width: 24px;
    margin-right: 25px;
  }

  .actions > .plain + .plain {
    margin-right: 17px;
  }

  .present {
    display: flex;
    height: 34px;
    border: 1px solid #dadce0;
    border-radius: 4px;
    font-weight: 500;
  }

  .present button {
    display: flex;
    align-items: center;
    padding: 0 11px;
    gap: 12px;
  }

  .present .present-more {
    padding: 0 2px;
    border-left: 1px solid #dadce0;
  }

  .share {
    display: flex;
    align-items: center;
    width: 84px;
    height: 34px;
    margin: 0 19px 0 7px;
    padding-left: 12px;
    gap: 4px;
    border-radius: 4px;
    background: #fbbc04;
    font-weight: 500;
  }

  .avatar {
    width: 30px;
    height: 30px;
    border-radius: 50%;
    background: #0097a7;
    color: #fff;
    font-size: 15px;
  }

  /* toolbar */
  .toolbar {
    display: flex;
    align-items: center;
    height: 38px;
    flex: none;
    padding: 0 5px 0 22px;
    gap: 1px;
    border-bottom: 1px solid #dadce0;
    color: #5f6368;
  }

  .new-slide {
    display: flex;
    background: #f1f3f4;
  }

  .tool {
    position: relative;
    display: grid;
    place-items: center;
    width: 26px;
    height: 25px;
    flex: none;
  }

  .tool.wide {
    width: 30px;
  }

  .tool.slim {
    width: 22px;
  }

  .tool.caret {
    width: 16px;
  }

  .tool.slim-caret {
    width: 10px;
  }

  .slim-caret .icon {
    margin: 0 -3px;
  }

  .tool.on {
    background: #feefc3;
    color: #202124;
  }

  .swatch {
    position: absolute;
    bottom: 0;
    width: 20px;
    height: 4px;
  }

  .sep {
    width: 1px;
    height: 20px;
    margin: 0 3px;
    background: #dadce0;
  }

  .font {
    display: flex;
    align-items: center;
    width: 100px;
    padding-left: 12px;
  }

  .font select {
    flex: 1;
    min-width: 0;
    appearance: none;
    color: #3c4043;
    font-size: 12px;
  }

  .font-size {
    display: flex;
    width: 84px;
    height: 23px;
    margin: 0 3px;
    border: 1px solid #d0d3d7;
  }

  .font-size button {
    display: grid;
    place-items: center;
    width: 23px;
  }

  .font-size input {
    width: 36px;
    border: solid #d0d3d7;
    border-width: 0 1px;
    color: #3c4043;
    font-size: 12px;
    text-align: center;
  }

  .collapse {
    margin-left: auto;
  }

  /* filmstrip */
  main {
    display: grid;
    grid-template-columns: 208px 1fr;
    flex: 1;
    min-height: 0;
  }

  aside {
    display: flex;
    flex-direction: column;
    min-height: 0;
    border-right: 1px solid #c4c7ca;
  }

  .filmstrip {
    position: relative;
    display: flex;
    flex: 1;
    flex-direction: column;
    justify-content: flex-end;
    min-height: 0;
    padding: 0 18px 2px 0;
    gap: 2px;
    overflow: hidden;
  }

  .film {
    display: flex;
    align-items: flex-start;
    flex: none;
    height: 93px;
    padding: 4px 4px 4px 0;
    border-radius: 0 4px 4px 0;
    color: #75797d;
    text-align: left;
  }

  .film.selected {
    background: #feefc3;
    color: #3c4043;
    font-weight: 500;
  }

  .number {
    width: 39px;
    padding-left: 16px;
    font-size: 13px;
    line-height: 14px;
  }

  .thumb {
    width: 146px;
    height: 84px;
    padding: 1px;
    border: 2px solid #ccc;
    border-radius: 6px;
    background: #fff;
    overflow: hidden;
  }

  .selected .thumb {
    border-color: #9a93a0;
  }

  .thumb-art {
    display: block;
    width: 100%;
    height: 100%;
  }

  .t-title {
    font: bold 22px 'Liberation Serif', serif;
  }

  .t-body {
    font-family: 'DejaVu Sans', sans-serif;
    font-size: 12px;
    font-weight: normal;
  }

  .t-badge {
    font: bold 14px 'Liberation Serif', serif;
  }

  .t-body.bold {
    font-weight: bold;
  }

  .red {
    fill: #d93a34;
  }

  .maroon {
    fill: #6b1526;
  }

  .blue {
    fill: #4a80d0;
  }

  .grey {
    fill: #999;
  }

  .link {
    fill: #2255bb;
    text-decoration: underline;
  }

  .t-cells {
    fill: #ececec;
    stroke: #8f8f8f;
    stroke-width: 2;
  }

  .scroll-thumb {
    position: absolute;
    right: 4px;
    bottom: 5px;
    width: 7px;
    height: 196px;
    border-radius: 4px;
    background: #dadce0;
  }

  .view-switch {
    display: flex;
    align-items: stretch;
    justify-content: space-between;
    height: 38px;
    flex: none;
    padding: 0 31px 0 29px;
    border-top: 1px solid #c4c7ca;
  }

  .view-switch button {
    display: grid;
    place-items: center;
    width: 45px;
    color: #6a6a6a;
  }

  .view-switch .current {
    border-top: 2px solid #000;
    color: #202124;
    padding: 0 4px 2px 0;
  }

  /* editor */
  .editor {
    display: flex;
    flex-direction: column;
    min-width: 0;
    min-height: 0;
  }

  .ruler-h {
    display: flex;
    height: 14px;
    flex: none;
    border-bottom: 1px solid #d5d8dc;
    background: #e8eaed;
  }

  .ruler-h svg,
  .ruler-v svg {
    display: block;
    font-size: 10px;
    fill: #5f6368;
  }

  .corner {
    width: 13px;
    border-right: 1px solid #d5d8dc;
    background: #f5f6f8;
  }

  .ruler-scale {
    display: flex;
    flex: 1;
    justify-content: center;
    overflow: hidden;
  }

  .stage {
    display: flex;
    flex: 1;
    min-height: 0;
  }

  .ruler-v {
    width: 13px;
    border-right: 1px solid #d5d8dc;
    background: #e8eaed;
    overflow: hidden;
  }

  .canvas {
    display: flex;
    align-items: center;
    justify-content: center;
    flex: 1;
    min-width: 0;
    background: #f6f8fb;
  }

  .slide {
    position: relative;
    width: 762px;
    height: 429px;
    flex: none;
    box-shadow: 0 0 2px 1px #d3d5d8;
    color: #111;
    font-family: Verdana, 'DejaVu Sans', sans-serif;
    font-size: 12px;
  }

  .slide > * {
    position: absolute;
  }

  .backdrop {
    inset: 0;
  }

  .serif {
    font-family: Georgia, Gelasio, 'Liberation Serif', serif;
  }

  .yours {
    top: 9px;
    left: 8px;
    font-size: 13px;
    line-height: 20px;
  }

  .answers {
    top: 35px;
    left: 9px;
    width: 181px;
  }

  .answers li {
    display: flex;
    align-items: baseline;
    height: 62px;
    font-size: 13px;
  }

  .answers span {
    width: 20px;
  }

  .answers p {
    color: #9a9a9a;
    font: 15px/26px Verdana, 'DejaVu Sans', sans-serif;
  }

  .saved {
    top: 377px;
    left: 0;
    width: 201px;
    font-size: 13px;
    font-weight: bold;
    line-height: 20px;
    text-align: center;
  }

  .saved a {
    display: block;
    margin-top: 10px;
    color: #1c62bd;
  }

  .badge {
    top: 8px;
    left: 212px;
    display: grid;
    place-items: center;
    filter: drop-shadow(2px 2px 1px #777);
  }

  .badge > * {
    grid-area: 1 / 1;
  }

  .badge p {
    font-size: 11px;
    font-weight: bold;
    line-height: 13px;
    text-align: center;
  }

  h1 {
    top: 17px;
    left: 301px;
    color: #4a80d0;
    font-size: 19px;
    line-height: 24px;
    white-space: nowrap;
  }

  .kesler {
    top: 9px;
    left: 699px;
    fill: #8f8f8f;
    font: bold 11px 'DejaVu Serif', serif;
  }

  .kesler .small {
    font-size: 10px;
  }

  .question {
    line-height: 15px;
  }

  .ask {
    position: relative;
    padding-left: 32px;
  }

  .ask span {
    position: absolute;
    left: 0;
    font-size: 10px;
  }

  .question ul {
    display: grid;
    gap: 6px;
    padding-left: 12px;
  }

  .question li {
    position: relative;
    padding-left: 38px;
    white-space: nowrap;
  }

  .question li span {
    position: absolute;
    left: 0;
  }

  .q1 {
    top: 100px;
    left: 217px;
    width: 250px;
  }

  .q1 ul {
    margin-top: 4px;
  }

  .q2 {
    top: 247px;
    left: 216px;
    width: 260px;
  }

  .q2 ul,
  .q3 ul {
    margin-top: 8px;
  }

  .q3 {
    top: 100px;
    left: 487px;
    width: 240px;
  }

  .q3 ul {
    padding-left: 9px;
  }

  .copyright {
    right: 7px;
    bottom: 0;
    color: #c2607c;
    font-size: 7px;
    line-height: 10px;
  }

  .selection {
    top: 2px;
    left: 13px;
  }

  .grip {
    display: flex;
    align-items: center;
    justify-content: center;
    height: 9px;
    flex: none;
    gap: 4px;
    border: solid #dadce0;
    border-width: 1px 0;
  }

  .grip i {
    width: 4px;
    height: 4px;
    border-radius: 50%;
    background: #c9ccd0;
  }

  .notes {
    position: relative;
    height: 77px;
    flex: none;
  }

  textarea {
    display: block;
    width: 100%;
    height: 100%;
    padding: 10px 15px;
    line-height: 16px;
    resize: none;
  }

  .explore,
  .side-panel {
    position: absolute;
    display: grid;
    place-items: center;
    width: 36px;
    height: 36px;
    background: #f8f9fa;
    color: #5f6368;
  }

  .explore {
    right: 59px;
    bottom: 8px;
    border: 1px solid #dadce0;
    border-radius: 2px;
  }

  .side-panel {
    right: -13px;
    bottom: 8px;
    padding-right: 9px;
    border-radius: 50%;
    background: #fff;
    box-shadow: 0 1px 3px #8a8d91;
    color: #3c4043;
  }
</style>
